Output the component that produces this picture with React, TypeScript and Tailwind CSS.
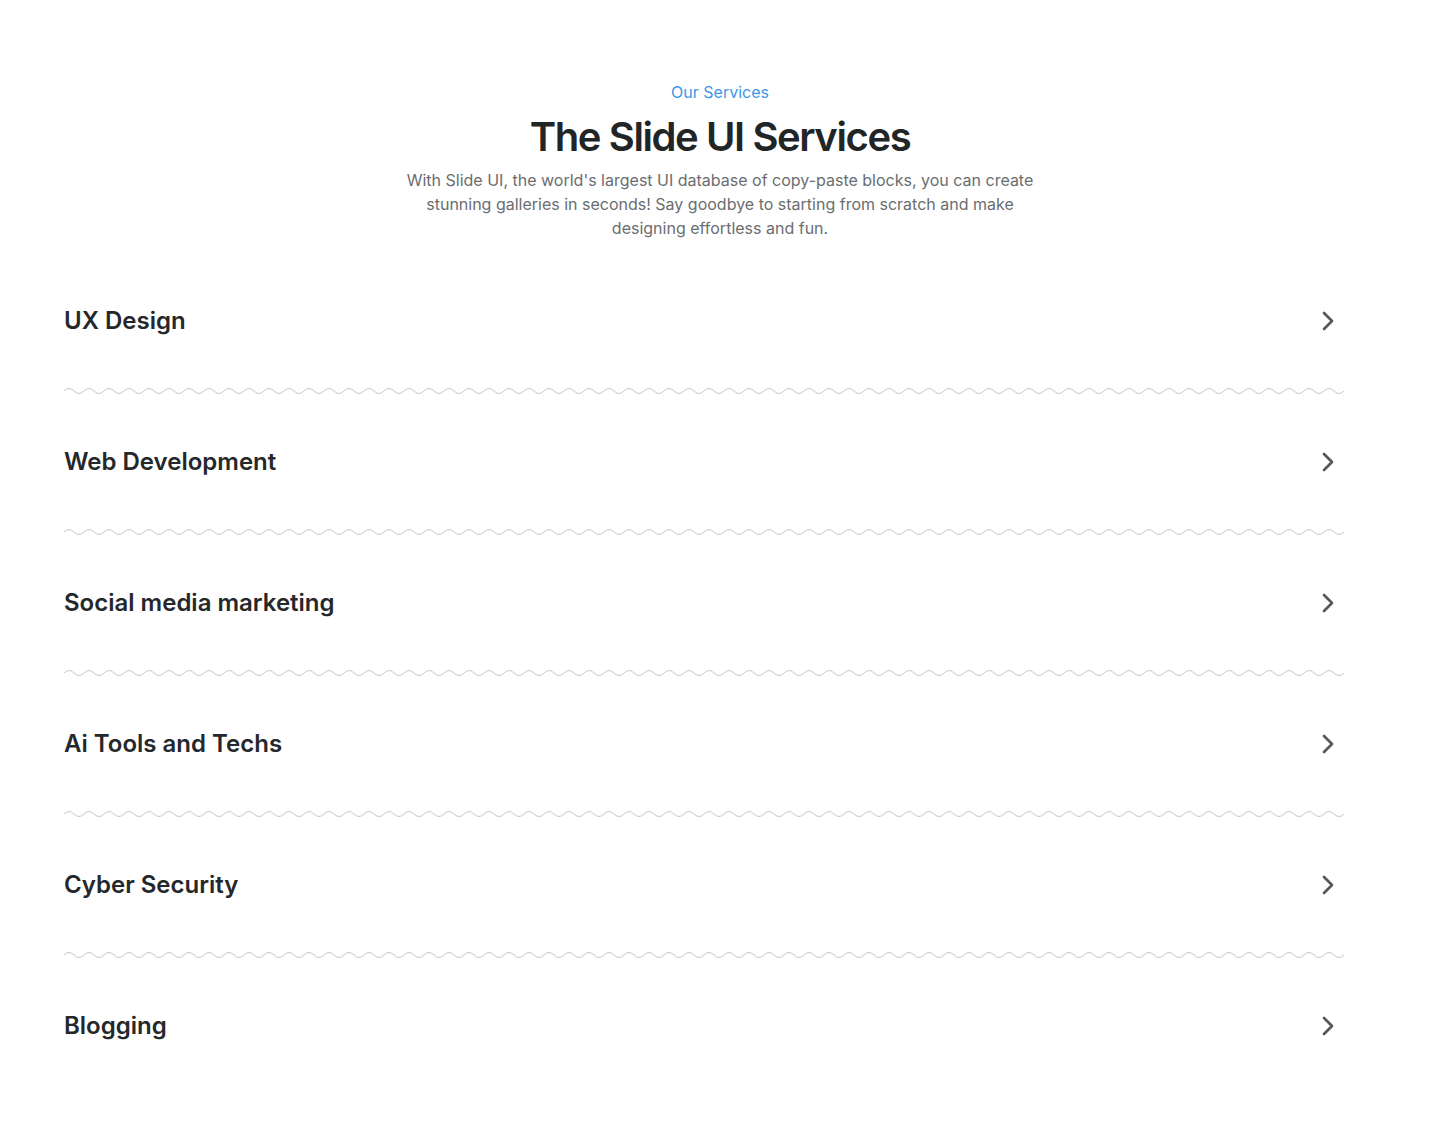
import { ChevronRight } from "lucide-react";

const services = [
  "UX Design",
  "Web Development",
  "Social media marketing",
  "Ai Tools and Techs",
  "Cyber Security",
  "Blogging",
];

const Wave = () => {
  const width = 1280;
  const half = 10;
  const count = Math.ceil(width / half);
  const d = `M0,4 q5,-5 10,0` + " t10,0".repeat(count - 1);
  return (
    <svg width={width} height={8} viewBox={`0 0 ${width} 8`} className="block">
      <path d={d} fill="none" stroke="#c6c6c6" strokeWidth={1} />
    </svg>
  );
};

const App = () => {
  return (
    <div className="min-h-screen bg-white font-['Inter',sans-serif] pt-20 pb-20">
      <section className="flex flex-col items-center text-center">
        <p className="text-base leading-6 text-[#3b98e6]">Our Services</p>
        <h2 className="mt-[9px] text-[40px] font-semibold leading-[48px] tracking-[-0.035em] text-[#222526]">
          The Slide UI Services
        </h2>
        <p className="mt-[7px] max-w-[640px] text-base leading-6 text-[#6b6d70]">
          With Slide UI, the world's largest UI database of copy-paste blocks, you can create stunning galleries in seconds! Say goodbye to starting from scratch and make designing effortless and fun.
        </p>
      </section>

      <div className="mt-[65px] pl-16 pr-24">
        {services.map((s, i) => (
          <div key={s}>
            <div className="flex h-8 items-center justify-between">
              <h3 className="text-2xl font-semibold leading-8 text-[#25282b]">{s}</h3>
              <ChevronRight size={32} strokeWidth={2} className="text-[#55585b]" />
            </div>
            {i < services.length - 1 && (
              <div className="mb-[51px] mt-[50px]">
                <Wave />
              </div>
            )}
          </div>
        ))}
      </div>
    </div>
  );
};

export default App;
